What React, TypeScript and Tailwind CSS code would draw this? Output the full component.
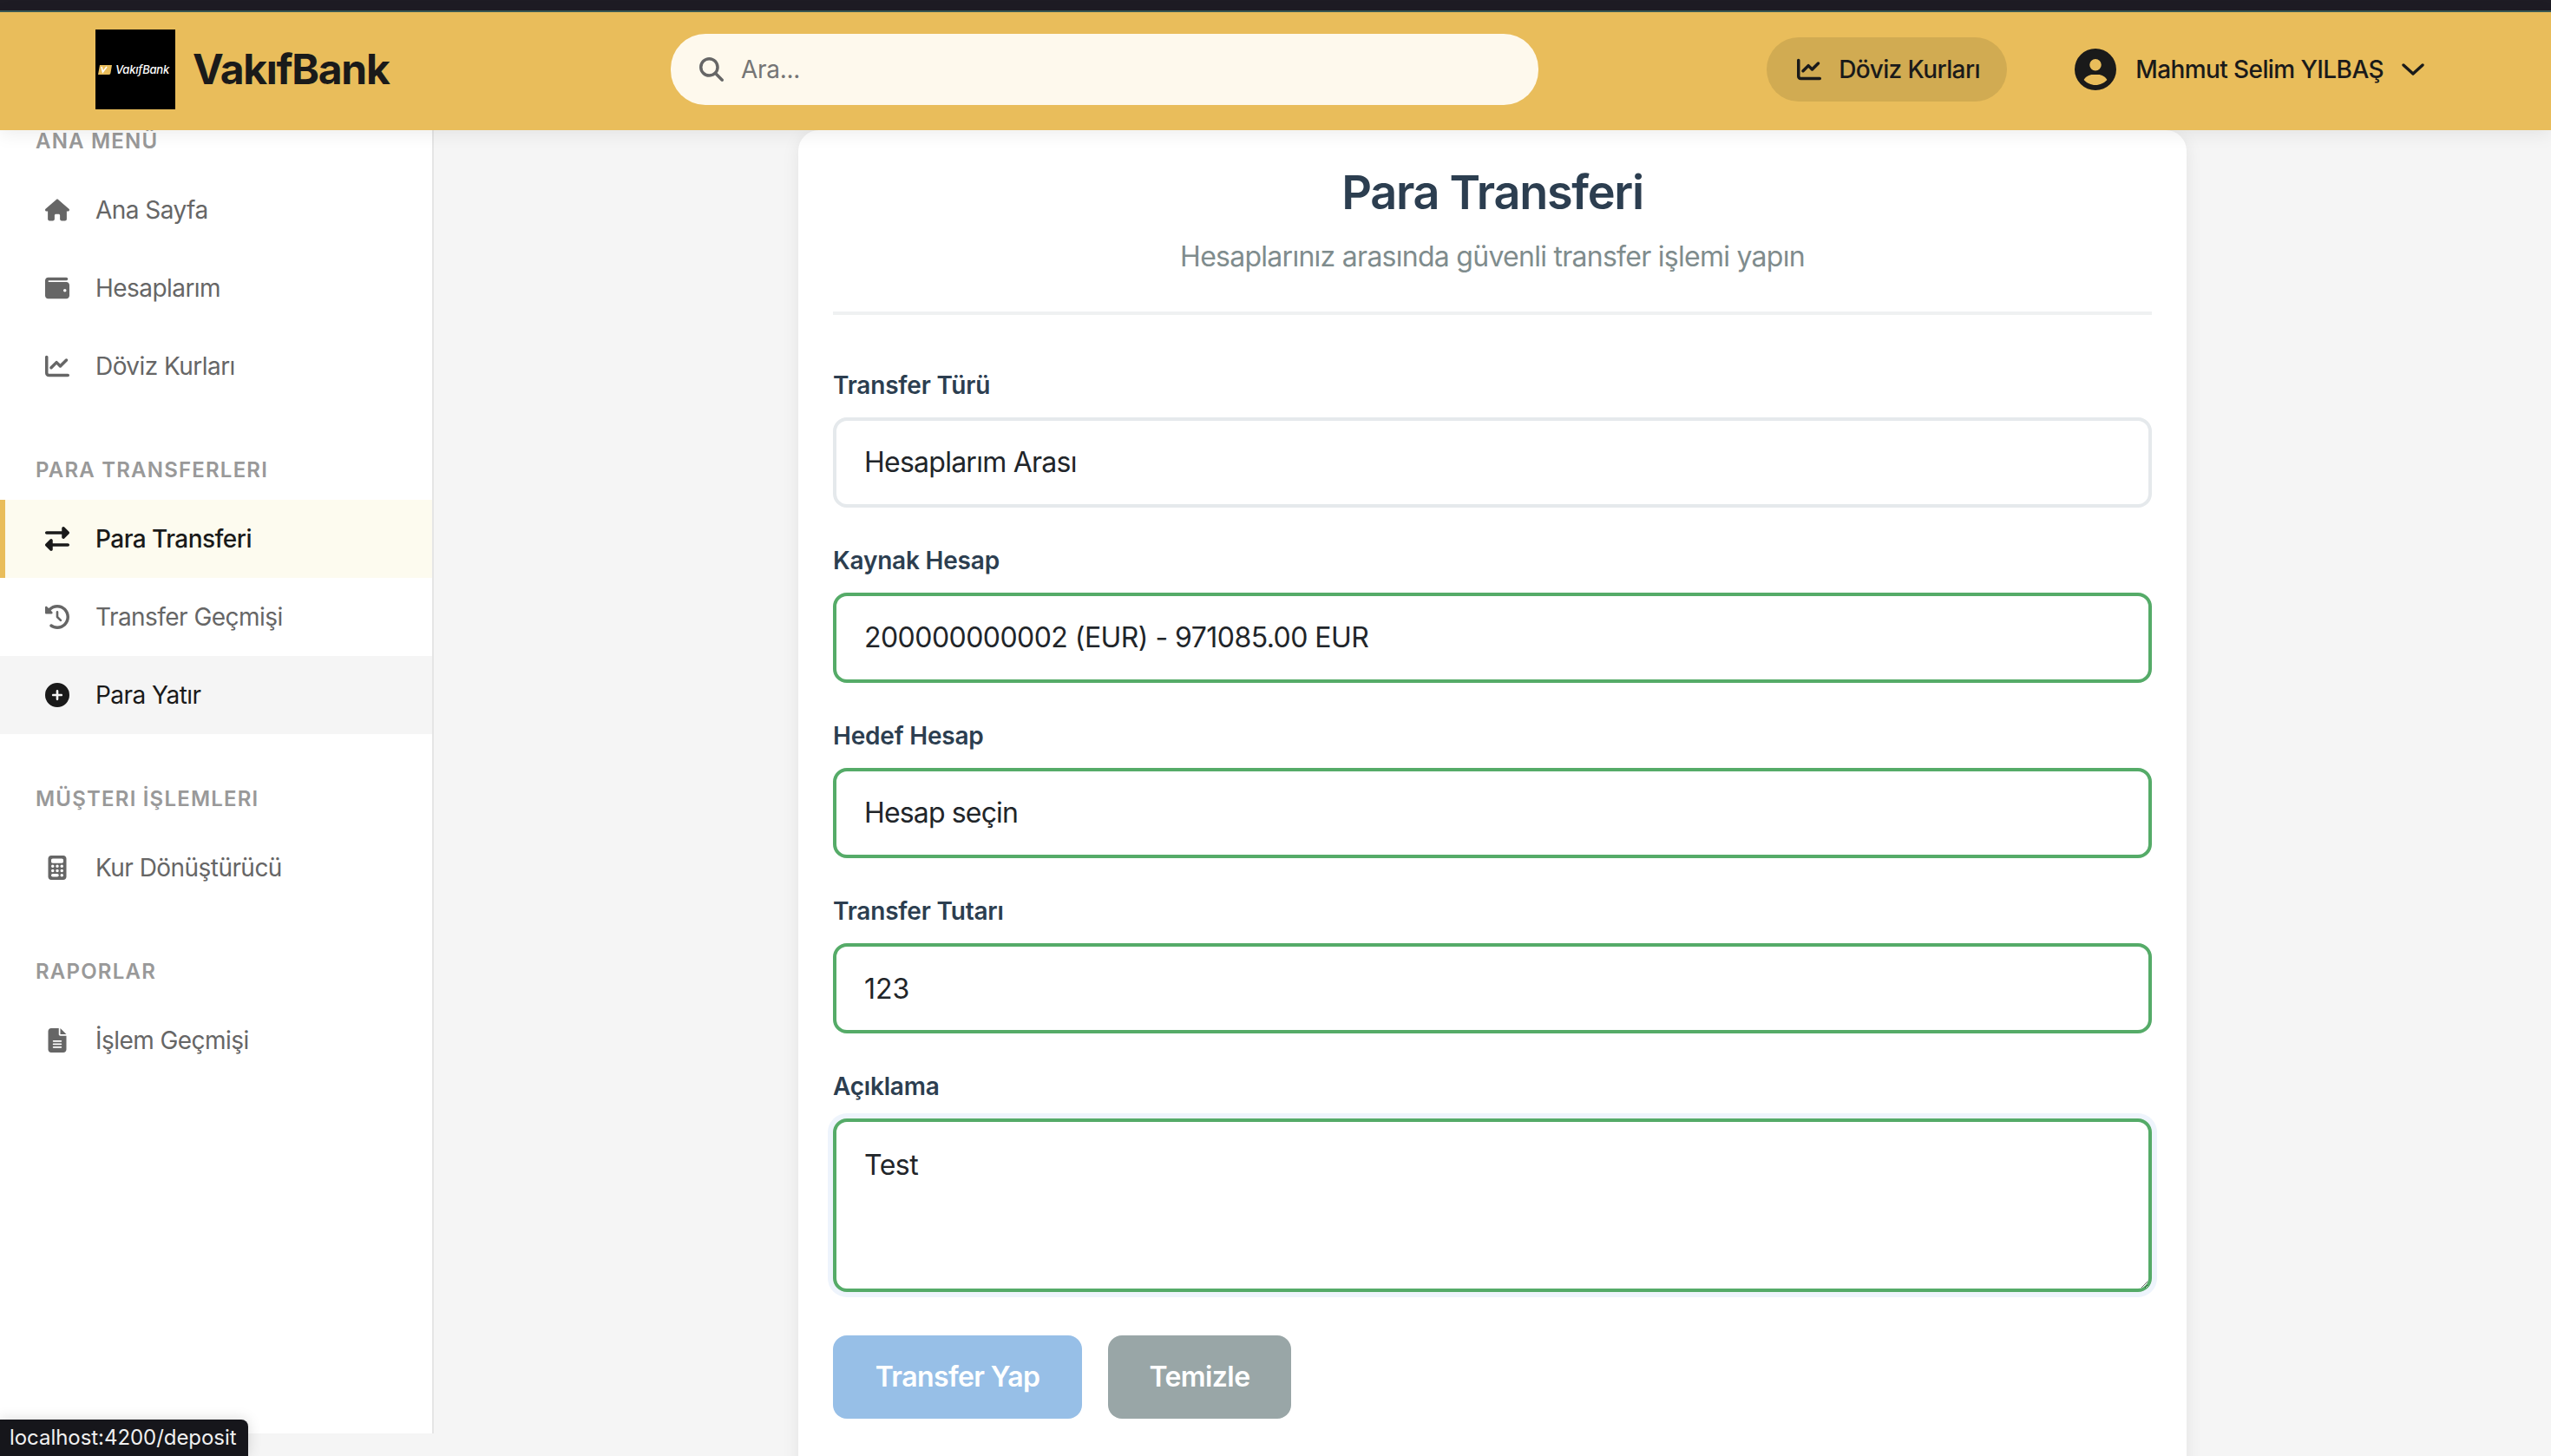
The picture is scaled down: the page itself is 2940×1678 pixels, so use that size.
import type { ReactNode } from "react";
import {
  FaCalculator,
  FaChartLine,
  FaCirclePlus,
  FaCircleUser,
  FaClockRotateLeft,
  FaFileLines,
  FaHouse,
  FaMagnifyingGlass,
  FaRightLeft,
  FaWallet,
} from "react-icons/fa6";

interface NavItem {
  label: string;
  icon: ReactNode;
  state?: "active" | "hover";
}

const sections: { title: string; items: NavItem[] }[] = [
  {
    title: "ANA MENÜ",
    items: [
      { label: "Ana Sayfa", icon: <FaHouse /> },
      { label: "Hesaplarım", icon: <FaWallet /> },
      { label: "Döviz Kurları", icon: <FaChartLine /> },
    ],
  },
  {
    title: "PARA TRANSFERLERI",
    items: [
      { label: "Para Transferi", icon: <FaRightLeft />, state: "active" },
      { label: "Transfer Geçmişi", icon: <FaClockRotateLeft /> },
      { label: "Para Yatır", icon: <FaCirclePlus />, state: "hover" },
    ],
  },
  {
    title: "MÜŞTERI İŞLEMLERI",
    items: [{ label: "Kur Dönüştürücü", icon: <FaCalculator /> }],
  },
  {
    title: "RAPORLAR",
    items: [{ label: "İşlem Geçmişi", icon: <FaFileLines /> }],
  },
];

const Logo = () => (
  <div className="flex h-[92px] w-[92px] shrink-0 items-center bg-black pl-[3px]">
    <svg width="16" height="11" viewBox="0 0 16 11" className="shrink-0">
      <path d="M2 0h14l-1.5 9a2 2 0 0 1-2 2H0z" fill="#e9bd5b" />
      <path d="M4 2l1.5 6L10 2" fill="none" stroke="#fff" strokeWidth="1.6" />
    </svg>
    <span className="ml-[4px] text-[13px] leading-none font-medium tracking-[-0.2px] text-white italic">
      VakıfBank
    </span>
  </div>
);

const Header = () => (
  <header className="relative z-10 flex h-[136px] shrink-0 items-center bg-[#e9bd5b] pr-[146px] pb-[4px] pl-[110px] text-[#1a1a1a] shadow-[0_4px_20px_rgba(0,0,0,0.08)]">
    <div className="flex w-[663px] shrink-0 items-center gap-[20px]">
      <Logo />
      <span className="text-[48px] leading-none font-bold tracking-[-1.3px]">VakıfBank</span>
    </div>
    <div className="flex h-[82px] w-[1000px] items-center rounded-[40px] bg-[#fef9ed] pl-[33px] text-[#666]">
      <FaMagnifyingGlass className="text-[28px]" />
      <span className="ml-[20px] text-[28px] tracking-[-0.3px] text-[#757575]">Ara...</span>
    </div>
    <div className="ml-auto flex items-center">
      <button className="flex h-[74px] w-[277px] items-center rounded-[40px] bg-[#d1ab52] pl-[35px] text-[28px] font-medium tracking-[-0.6px]">
        <FaChartLine className="text-[28px]" />
        <span className="ml-[20px]">Döviz Kurları</span>
      </button>
      <FaCircleUser className="ml-[78px] text-[48px]" />
      <span className="ml-[22px] text-[28px] font-medium tracking-[-0.6px]">Mahmut Selim YILBAŞ</span>
      <svg width="26" height="14" viewBox="0 0 26 14" className="ml-[21px]" fill="none" stroke="currentColor" strokeWidth="3.4" strokeLinecap="round" strokeLinejoin="round">
        <path d="M2 2l11 10L24 2" />
      </svg>
    </div>
  </header>
);

const NavRow = ({ item }: { item: NavItem }) => {
  const tone =
    item.state === "active"
      ? "border-l-[6px] border-[#e9bd5b] bg-[#fdfbef] pl-[46px] font-medium text-[#1a1a1a]"
      : item.state === "hover"
        ? "bg-[#f5f5f5] pl-[52px] text-[#1a1a1a]"
        : "pl-[52px] text-[#666]";
  return (
    <div className={`flex h-[90px] items-center text-[28px] tracking-[-0.55px] ${tone}`}>
      <span className="flex w-[28px] justify-center text-[28px]">{item.icon}</span>
      <span className="ml-[30px]">{item.label}</span>
    </div>
  );
};

const Sidebar = () => (
  <aside className="h-[1502px] w-[500px] shrink-0 border-r-2 border-[#e5e5e5] bg-white">
    <nav className="-mt-[5px]">
      {sections.map((section) => (
        <div key={section.title} className="mb-[57px]">
          <h3 className="mb-[16px] pl-[41px] text-[24px] leading-[36px] font-semibold tracking-[1.2px] text-[#999]">
            {section.title}
          </h3>
          {section.items.map((item) => (
            <NavRow key={item.label} item={item} />
          ))}
        </div>
      ))}
    </nav>
  </aside>
);

const fieldClass =
  "block h-[104px] w-full appearance-none rounded-[16px] border-4 bg-white px-[32px] text-[32px] text-[#212529] outline-none";

const Field = ({ label, children }: { label: string; children: ReactNode }) => (
  <div className="mb-[44px]">
    <label className="mb-[20px] block text-[28px] leading-[34px] font-semibold tracking-[-0.2px] text-[#2c3e50]">
      {label}
    </label>
    {children}
  </div>
);

const TransferForm = () => (
  <form>
    <Field label="Transfer Türü">
      <select className={`${fieldClass} border-[#e5e9ec] tracking-[-0.75px]`} defaultValue="internal">
        <option value="internal">Hesaplarım Arası</option>
      </select>
    </Field>
    <Field label="Kaynak Hesap">
      <select className={`${fieldClass} border-[#55ab68] tracking-[-0.55px]`} defaultValue="eur">
        <option value="eur">200000000002 (EUR) - 971085.00 EUR</option>
      </select>
    </Field>
    <Field label="Hedef Hesap">
      <select className={`${fieldClass} border-[#55ab68] tracking-[-0.85px]`} defaultValue="">
        <option value="">Hesap seçin</option>
      </select>
    </Field>
    <Field label="Transfer Tutarı">
      <input className={`${fieldClass} border-[#55ab68]`} defaultValue="123" />
    </Field>
    <Field label="Açıklama">
      <textarea
        className="block h-[200px] w-full rounded-[16px] border-4 border-[#55ab68] bg-white px-[32px] py-[26px] text-[32px] tracking-[-0.5px] text-[#212529] shadow-[0_0_0_6px_#eef4fc] outline-none"
        defaultValue="Test"
      />
    </Field>
    <div className="mt-[50px] flex gap-[30px]">
      <button type="button" className="h-[96px] w-[287px] rounded-[16px] bg-[#97bfe7] text-[32px] font-semibold tracking-[-0.6px] text-white">
        Transfer Yap
      </button>
      <button type="button" className="h-[96px] w-[211px] rounded-[16px] bg-[#99a6a7] text-[32px] font-semibold tracking-[-0.6px] text-white">
        Temizle
      </button>
    </div>
  </form>
);

export default function App() {
  return (
    <div className="relative flex h-[1678px] flex-col overflow-hidden bg-[#f5f5f5] font-['Inter',sans-serif]">
      <div className="h-[14px] shrink-0 border-b-2 border-[#3a5a55] bg-[#1e1c24]" />
      <Header />
      <div className="flex min-h-0 flex-1">
        <Sidebar />
        <main className="min-w-0 flex-1">
          <div className="mx-auto h-[1600px] w-[1600px] rounded-[24px] bg-white px-[40px] pt-[36px] shadow-[0_4px_20px_rgba(0,0,0,0.08)]">
            <div className="mb-[64px] border-b-4 border-[#eff1f2] pb-[44px] text-center">
              <h1 className="text-[54px] leading-[72px] font-semibold tracking-[-1.3px] text-[#2c3e50]">Para Transferi</h1>
              <p className="mt-[19px] text-[32px] leading-[38px] tracking-[-0.73px] text-[#7f8c8d]">
                Hesaplarınız arasında güvenli transfer işlemi yapın
              </p>
            </div>
            <TransferForm />
          </div>
        </main>
      </div>
      <div className="absolute bottom-0 left-0 flex h-[42px] w-[286px] items-center rounded-tr-[8px] bg-[#16161b] pb-[1px] pl-[11px] text-[24px] tracking-[-0.05px] text-[#f0f0f0] shadow-[0_0_16px_rgba(0,0,0,0.15)]">
        localhost:4200/deposit
      </div>
    </div>
  );
}
